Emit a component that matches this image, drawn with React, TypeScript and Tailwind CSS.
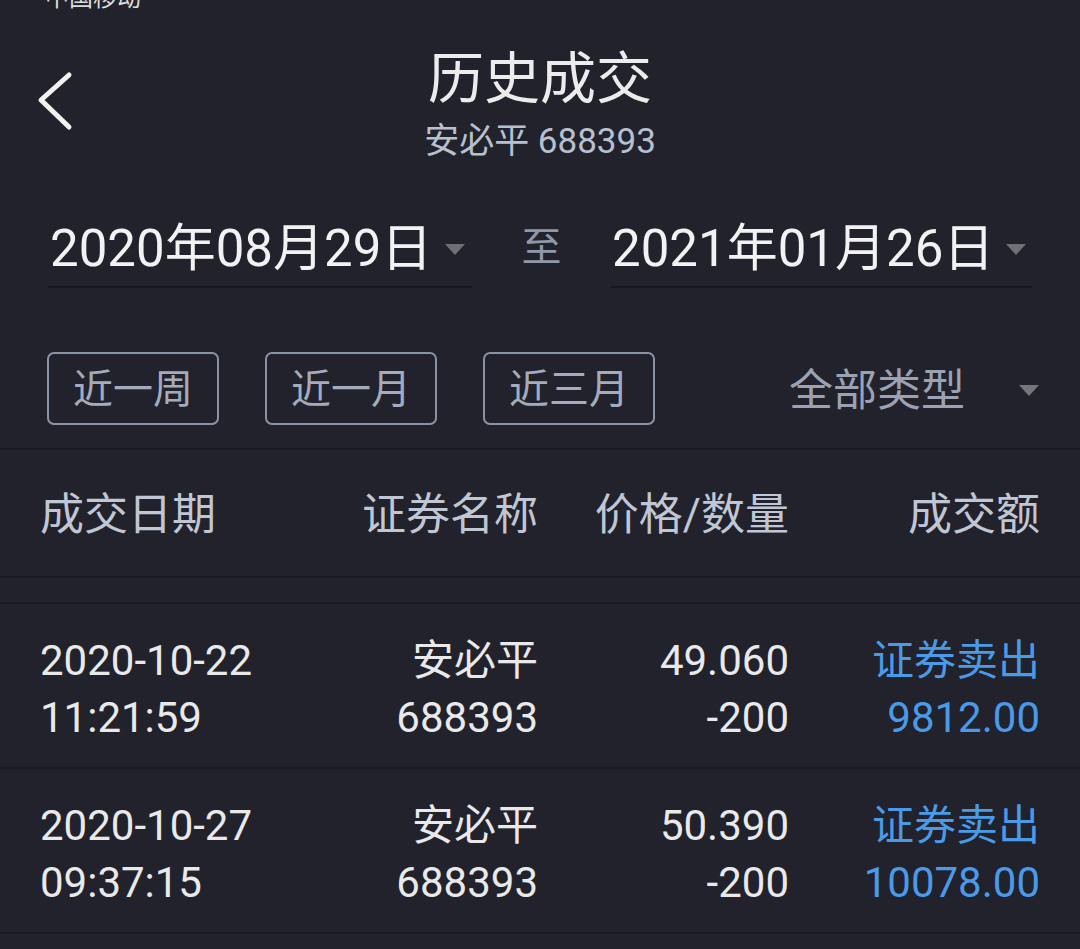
const rows = [
  { date: '2020-10-22', time: '11:21:59', name: '安必平', code: '688393', price: '49.060', qty: '-200', type: '证券卖出', amount: '9812.00' },
  { date: '2020-10-27', time: '09:37:15', name: '安必平', code: '688393', price: '50.390', qty: '-200', type: '证券卖出', amount: '10078.00' },
]

function Caret({ className }: { className?: string }) {
  return (
    <svg width="20" height="11" viewBox="0 0 20 11" className={className}>
      <path d="M0 0 L20 0 L10 11 Z" fill="currentColor" />
    </svg>
  )
}

export default function App() {
  return (
    <div className="w-[1080px] h-[949px] overflow-hidden bg-[#21222b] text-[#e9e9ea] font-[Roboto,'Noto_Sans_CJK_SC',sans-serif]">
      {/* status bar, cut off at top */}
      <div className="pl-[45px] -mt-[17px] text-[24px] leading-[30px] text-[#dcdcdc]">中国移动</div>

      {/* nav */}
      <div className="mt-[34px] grid grid-cols-[1fr_auto_1fr]">
        <div>
          <svg width="40" height="60" viewBox="0 0 40 60" className="ml-[35px] mt-[24px] text-[#f2f2f2]">
            <polyline points="34,4 6,29 34,56" fill="none" stroke="currentColor" strokeWidth="5" strokeLinecap="round" strokeLinejoin="round" />
          </svg>
        </div>
        <div className="flex flex-col items-center">
          <div className="text-[56px] leading-[64px] text-[#ececec]">历史成交</div>
          <div className="mt-[9px] text-[35px] leading-[44px] text-[#b8c0cf]">安必平 688393</div>
        </div>
        <div />
      </div>

      {/* date range */}
      <div className="mt-[55px] flex items-center px-[48px]">
        <div className="w-[424px] flex items-center justify-between pl-[2px] pr-[7px] pb-[7px] border-b-2 border-[#16171c]">
          <span className="text-[51px] leading-[60px] text-[#f2f2f2]">2020年08月29日</span>
          <Caret className="text-[#6e7076]" />
        </div>
        <div className="flex-1 flex justify-center pb-[12px] text-[40px] leading-[48px] text-[#8f98ab]">至</div>
        <div className="w-[421px] flex items-center justify-between pl-[1px] pr-[6px] pb-[7px] border-b-2 border-[#16171c]">
          <span className="text-[51px] leading-[60px] text-[#f2f2f2]">2021年01月26日</span>
          <Caret className="text-[#6e7076]" />
        </div>
      </div>

      {/* quick filters */}
      <div className="mt-[64px] flex items-center pl-[47px] pr-[41px]">
        <div className="flex gap-[46px]">
          {['近一周', '近一月', '近三月'].map((t) => (
            <div key={t} className="w-[172px] h-[73px] flex items-center justify-center pt-[2px] border-2 border-[#8a93a5] rounded-[7px] text-[40px] text-[#a3abbc]">
              {t}
            </div>
          ))}
        </div>
        <div className="ml-auto flex items-center gap-[54px]">
          <span className="text-[44px] leading-[52px] text-[#9aa2b3] pt-[4px]">全部类型</span>
          <Caret className="text-[#74767c] mt-[4px]" />
        </div>
      </div>

      {/* table header */}
      <div className="mt-[23px] border-t-2 border-[#1a1b22]">
        <div className="h-[126px] grid grid-cols-[260px_238px_251px_251px] items-center px-[40px] text-[44px] text-[#c0c6d3] pt-[4px]">
          <div>成交日期</div>
          <div className="text-right">证券名称</div>
          <div className="text-right">价格/数量</div>
          <div className="text-right">成交额</div>
        </div>
        <div className="h-[26px] border-t-2 border-[#1a1b22]" />
      </div>

      {/* rows */}
      <div className="border-t-2 border-[#1a1b22]">
        {rows.map((r) => (
          <div key={r.date + r.time} className="grid grid-cols-[260px_238px_251px_251px] px-[40px] pt-[28px] pb-[21px] text-[42px] leading-[57px] border-b-2 border-[#1a1b22]">
            <div>
              <div>{r.date}</div>
              <div>{r.time}</div>
            </div>
            <div className="text-right">
              <div>{r.name}</div>
              <div>{r.code}</div>
            </div>
            <div className="text-right">
              <div>{r.price}</div>
              <div>{r.qty}</div>
            </div>
            <div className="text-right text-[#4a9ae8]">
              <div>{r.type}</div>
              <div>{r.amount}</div>
            </div>
          </div>
        ))}
      </div>
    </div>
  )
}
